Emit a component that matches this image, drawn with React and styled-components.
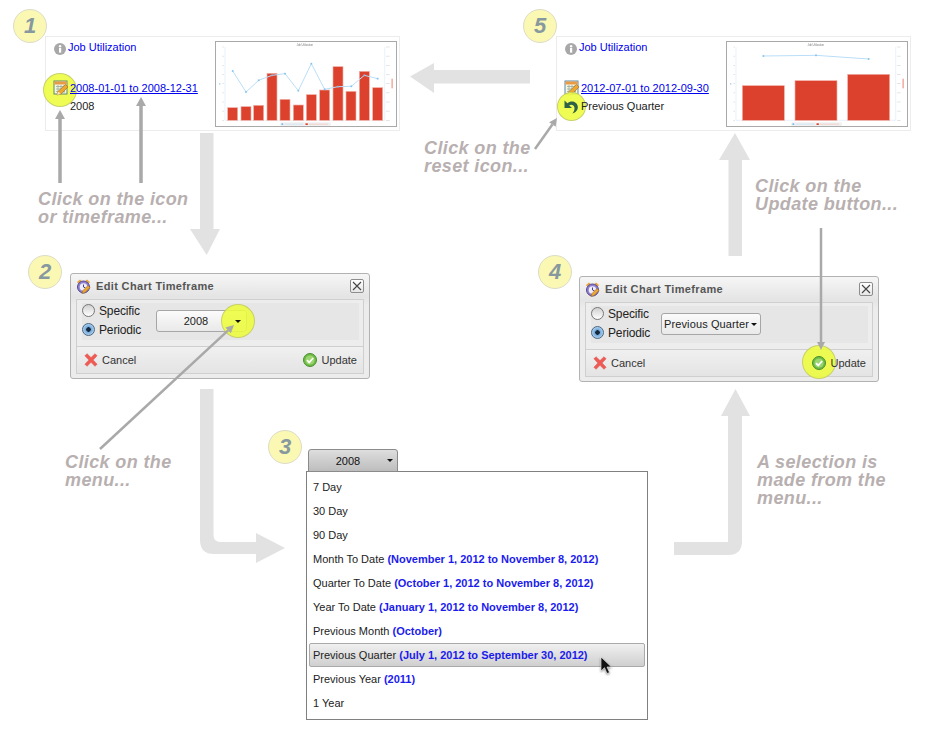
import React from "react";
import styled, { createGlobalStyle } from "styled-components";

const Global = createGlobalStyle`
  html, body { margin: 0; padding: 0; background: #fff; }
  body { font-family: "Liberation Sans", Arial, sans-serif; }
`;

const Canvas = styled.div`
  position: relative;
  width: 925px;
  height: 748px;
  overflow: hidden;
  background: #fff;
`;

const Layer = styled.svg`
  position: absolute;
  left: 0;
  top: 0;
  z-index: ${(p) => p.$z};
  pointer-events: none;
`;

const Badge = styled.div`
  position: absolute;
  left: ${(p) => p.$x - 17}px;
  top: ${(p) => p.$y - 17}px;
  width: 34px;
  height: 34px;
  box-sizing: border-box;
  border-radius: 50%;
  background: #fbf8b4;
  border: 1px solid #dcdcc8;
  display: flex;
  align-items: center;
  justify-content: center;
  font: italic bold 22px "Liberation Sans", sans-serif;
  color: #87999f;
`;

const Caption = styled.div`
  position: absolute;
  left: ${(p) => p.$x}px;
  top: ${(p) => p.$y}px;
  font: italic bold 18px/18px "Liberation Sans", sans-serif;
  letter-spacing: 0.38px;
  color: #b8b0b0;
  white-space: pre-line;
`;

/* ---------- result panels ---------- */
const Panel = styled.section`
  position: absolute;
  left: ${(p) => p.$x}px;
  top: 36px;
  width: 355px;
  height: 95px;
  box-sizing: border-box;
  border: 1px solid #ececec;
  padding: 3px 2px 0 8px;
  display: flex;
  justify-content: space-between;
  align-items: flex-start;
  font-size: 11px;
  line-height: 14px;
  color: #222;
`;

const Summary = styled.div`
  display: flex;
  flex-direction: column;
`;

const TitleRow = styled.div`
  display: flex;
  align-items: center;
  gap: 2px;
  height: 14px;
  margin-bottom: 27px;
  color: #0000ee;
`;

const InfoRow = styled.div`
  display: flex;
  align-items: center;
  height: 14px;
  margin-bottom: 4px;
`;

const IconSlot = styled.span`
  position: relative;
  flex: none;
  width: 16px;
  height: 14px;
  display: block;
`;

const Halo = styled.span`
  position: absolute;
  left: ${(p) => p.$l}px;
  top: ${(p) => p.$t}px;
  width: ${(p) => p.$d}px;
  height: ${(p) => p.$d}px;
  box-sizing: border-box;
  border-radius: 50%;
  background: rgba(236, 252, 60, 0.88);
  border: 1px solid rgba(170, 175, 120, 0.55);
`;

const SlotIcon = styled.svg`
  position: absolute;
  left: ${(p) => p.$l || 0}px;
  top: ${(p) => p.$t || 0}px;
`;

const DateLink = styled.a`
  position: relative;
  color: #0000ee;
  text-decoration: underline;
`;

const StatusText = styled.span`
  position: relative;
`;

const ChartFrame = styled.div`
  width: 182px;
  height: 86px;
  margin-top: 1px;
  box-sizing: border-box;
  border: 1px solid #a9a9a9;
  background: #fff;
`;

const ChartSvg = styled.svg`
  display: block;
  width: 180px;
  height: 84px;
  filter: blur(0.4px);
`;

/* ---------- dialogs ---------- */
const Dialog = styled.div`
  position: absolute;
  left: ${(p) => p.$x}px;
  top: ${(p) => p.$y}px;
  width: 300px;
  height: 106px;
  box-sizing: border-box;
  border: 1px solid #b2b2b2;
  border-radius: 3px;
  padding: 0 5px 4px;
  background: linear-gradient(#f6f6f6, #e4e4e4 22%, #ececec 30%);
  color: #333;
`;

const TitleBar = styled.header`
  height: 25px;
  display: flex;
  align-items: center;
  gap: 5px;
`;

const DialogTitle = styled.h2`
  margin: 0 0 2px;
  flex: 1;
  font: bold 11px "Liberation Sans", sans-serif;
  letter-spacing: 0.35px;
  color: #555;
`;

const CloseBox = styled.button`
  width: 14px;
  height: 14px;
  margin-bottom: 1px;
  padding: 0;
  box-sizing: border-box;
  border: 1px solid #8d8d8d;
  border-radius: 2px;
  background: linear-gradient(#fff, #e6e6e6);
  display: flex;
  align-items: center;
  justify-content: center;
`;

const DialogBody = styled.div`
  height: 75px;
  box-sizing: border-box;
  border: 1px solid #cfcfcf;
  background: #ededed;
`;

const Options = styled.div`
  height: 37px;
  margin: 3px 4px 6px 5px;
  background: #e6e6e6;
  display: flex;
  align-items: center;
`;

const RadioGroup = styled.div`
  width: 74px;
  flex: none;
  margin-top: -3px;
  display: flex;
  flex-direction: column;
  font-size: 12px;
  letter-spacing: -0.15px;
  color: #222;
`;

const RadioRow = styled.label`
  height: 19px;
  display: flex;
  align-items: center;
  gap: 4px;
`;

const Radio = styled.span`
  width: 13px;
  height: 13px;
  box-sizing: border-box;
  border-radius: 50%;
  border: 1px solid ${(p) => (p.$on ? "#49657f" : "#777")};
  background: ${(p) =>
    p.$on
      ? "radial-gradient(circle at 50% 50%, #16283a 0 2px, #6ea6da 2.5px, #b6d6f2 6px)"
      : "linear-gradient(#d0d0d0, #fff)"};
`;

const Select = styled.div`
  width: ${(p) => p.$w}px;
  height: 22px;
  margin-top: -1px;
  box-sizing: border-box;
  border: 1px solid #a6a6a6;
  border-radius: 3px;
  background: linear-gradient(#fbfbfb, #e9e9e9);
  display: flex;
  align-items: center;
  position: relative;
  font-size: 11px;
  letter-spacing: ${(p) => (p.$compact ? "0.12px" : "0")};
  color: #222;
  padding: 0 2px;
  margin-left: ${(p) => p.$ml || 0}px;
`;

const SelectLabel = styled.span`
  flex: ${(p) => (p.$compact ? "none" : 1)};
  text-align: center;
  padding-right: ${(p) => (p.$compact ? 0 : 2)}px;
`;

const Caret = styled.span`
  width: 0;
  height: 0;
  border-left: 3px solid transparent;
  border-right: 3px solid transparent;
  border-top: 3px solid #111;
  margin-left: ${(p) => p.$ml || 0}px;
  margin-right: ${(p) => p.$mr || 0}px;
  flex: none;
  position: relative;
  z-index: 2;
`;

const SelectHalo = styled(Halo)`
  z-index: 1;
`;

const Footer = styled.footer`
  height: 27px;
  box-sizing: border-box;
  padding: 0 6px 0 7px;
  border-top: 1px solid #cfcfcf;
  background: linear-gradient(#f0f0f0, #e4e4e4);
  display: flex;
  align-items: center;
  justify-content: space-between;
  font-size: 11px;
  color: #333;
`;

const FooterAction = styled.span`
  display: flex;
  align-items: center;
  gap: ${(p) => p.$gap}px;
  position: relative;
`;

const ActionLabel = styled.span`
  position: relative;
  z-index: 2;
`;

const ActionIcon = styled.svg`
  position: relative;
  z-index: 2;
  flex: none;
`;

/* ---------- dropdown ---------- */
const Dropdown = styled.div`
  position: absolute;
  left: 306px;
  top: 449px;
  width: 342px;
`;

const Trigger = styled.div`
  width: 90px;
  height: 23px;
  margin-left: 2px;
  margin-bottom: -1px;
  box-sizing: border-box;
  border: 1px solid #8b8b8b;
  border-radius: 3px 3px 0 0;
  background: linear-gradient(#dedede, #bdbdbd);
  display: flex;
  align-items: center;
  font-size: 11px;
  color: #111;
  position: relative;
`;

const TriggerLabel = styled.span`
  flex: 1;
  text-align: center;
`;

const Menu = styled.ul`
  list-style: none;
  margin: 0;
  padding: 3px 2px 4px;
  height: 249px;
  box-sizing: border-box;
  border: 1px solid #808080;
  background: #fff;
  font-size: 11px;
  color: #222;
`;

const MenuItem = styled.li`
  position: relative;
  height: 24px;
  box-sizing: border-box;
  padding-left: 3px;
  display: flex;
  align-items: center;
  white-space: pre;
  border: 1px solid ${(p) => (p.$active ? "#aaa" : "transparent")};
  border-radius: 2px;
  background: ${(p) => (p.$active ? "linear-gradient(#f0f0f0, #cfcfcf)" : "none")};
`;

const Range = styled.b`
  color: #1b1bee;
`;

const Cursor = styled.svg`
  position: absolute;
  left: 290px;
  top: 12px;
  filter: drop-shadow(0 1px 1px rgba(0, 0, 0, 0.45));
`;

/* ---------- drawings ---------- */
const InfoIcon = () => (
  <svg width="12" height="12" viewBox="0 0 12 12" style={{ flex: "none", marginTop: 3 }}>
    <circle cx="6" cy="6" r="6" fill="#a8a8a8" />
    <rect x="5" y="5" width="2.2" height="4.6" fill="#fff" />
    <circle cx="6.1" cy="3.2" r="1.2" fill="#fff" />
  </svg>
);

const CalendarIcon = ({ $border, ...props }) => (
  <SlotIcon width="16" height="16" viewBox="0 0 16 16" {...props}>
    <rect x="1" y="1" width="13" height="13" fill="#f6f6e0" stroke={$border} />
    <rect x="1.5" y="1.5" width="12" height="3" fill="#e99a45" />
    <path d="M3 6.5h9M3 9h9M3 11.5h9M5 5v8M8 5v8M11 5v8" stroke="#94ac9c" strokeWidth="0.8" />
    <path d="M4 15l1-3.500L12.500 4.500 15 7l-7 7z" fill="#eda92f" stroke="#a4661b" strokeWidth="0.6" />
    <path d="M4 15l1-3.500 3 2.500z" fill="#f6e2b6" />
  </SlotIcon>
);

const ResetIcon = (props) => (
  <SlotIcon width="16" height="16" viewBox="0 0 16 16" {...props}>
    <path d="M1.500 1.500v7.500h7.500L6.200 6.400C8 5.300 10.500 5.900 11.300 8c.7 2-.2 4.500-1.900 6.500 3.500-1 5.800-3.700 5.400-7C14.300 3.200 8.500.8 4.400 4.200z" fill="#2f6147" />
  </SlotIcon>
);

const ClockIcon = () => (
  <svg width="15" height="15" viewBox="0 0 15 15" style={{ flex: "none" }}>
    <path d="M1 3l3-2.500 1.500 1.500-3 3zM14 3l-3-2.500-1.500 1.500 3 3z" fill="#e9a23a" />
    <circle cx="7.500" cy="8" r="6" fill="#8f7fd0" stroke="#54478f" strokeWidth="1" />
    <circle cx="7.500" cy="8" r="3.800" fill="#efecfa" />
    <path d="M7.500 5.500V8l2 1" stroke="#4a3f86" strokeWidth="1" fill="none" />
    <path d="M6 14.500l1-3 5-5 2 2-5 5z" fill="#eda92f" stroke="#9a5f1a" strokeWidth="0.5" />
  </svg>
);

const CrossIcon = () => (
  <ActionIcon width="14" height="14" viewBox="0 0 13 13">
    <path d="M.8 2.600L2.800.6l3.700 3.600L10.200.6l2 2L8.500 6.500l3.700 3.900-2 2-3.700-3.700-3.700 3.700-2-2 3.700-3.900z" fill="#ef5a54" stroke="#d9504c" strokeWidth="0.4" />
  </ActionIcon>
);

const CheckIcon = () => (
  <ActionIcon width="14" height="14" viewBox="0 0 14 14">
    <circle cx="7" cy="7" r="6.500" fill="#6dbb45" stroke="#4b8f2f" />
    <circle cx="7" cy="7" r="4.600" fill="#9ad56e" />
    <path d="M4 7.200l2.200 2.200L10.200 5" stroke="#fff" strokeWidth="1.700" fill="none" />
  </ActionIcon>
);

const TICK_ROWS = [33, 60.5, 88, 115.5, 143, 170.5, 198, 225.5, 253];

const Chart = ({ ox, oy, axisL, axisR, bars, barW, line, markerSize }) => {
  const mid = (axisL + axisR) / 2;
  return (
    <ChartSvg viewBox={`${ox} ${oy} 540 252`}>
      <text x={mid} y={oy + 12} fontSize="8" fill="#777" textAnchor="middle" fontFamily="Liberation Sans, sans-serif">
        Job Utilization
      </text>
      <path d={`M${axisL} 33V253M${axisR} 33V253M${axisL} 253H${axisR}`} stroke="#dcecfa" strokeWidth="2" fill="none" />
      {TICK_ROWS.map((y) => (
        <g key={y} fill="#d8d8d8">
          <rect x={axisL - 8} y={y - 1} width="5" height="2" />
          <rect x={axisR + 4} y={y - 1} width="11" height="2" />
        </g>
      ))}
      {bars.map(([x, top]) => (
        <rect key={x} x={x} y={top} width={barW} height={253 - top} fill="#dc412e" stroke="#f2b0a6" strokeWidth="2" />
      ))}
      <polyline points={line.map((p) => p.join(",")).join(" ")} fill="none" stroke="#b9def8" strokeWidth="3" />
      {line.map(([x, y]) => (
        <rect key={x} x={x - markerSize / 2} y={y - markerSize / 2} width={markerSize} height={markerSize} fill="#7fc2f0" />
      ))}
      <rect x={axisL - 18} y="141" width="4" height="5" fill="#aed8f4" />
      <rect x={axisR + 20} y="128" width="5" height="29" fill="#f4b4aa" />
      <rect x={mid - 74} y="259" width="152" height="11" rx="3" fill="#f1f1f1" />
      <rect x={mid - 70} y="262" width="5" height="5" fill="#6fb9ee" />
      <rect x={mid - 60} y="263" width="55" height="3" fill="#cfe6f6" />
      <rect x={mid + 2} y="262" width="7" height="5" fill="#dc412e" />
      <rect x={mid + 12} y="263" width="58" height="3" fill="#f0cfc9" />
    </ChartSvg>
  );
};

const PointerArrow = ({ x1, y1, x2, y2, w = 3.5, head = 5, len = 9 }) => {
  const a = Math.atan2(y2 - y1, x2 - x1);
  const bx = x2 - Math.cos(a) * len;
  const by = y2 - Math.sin(a) * len;
  const nx = -Math.sin(a);
  const ny = Math.cos(a);
  return (
    <g>
      <line x1={x1} y1={y1} x2={bx} y2={by} stroke="#a9a9a9" strokeWidth={w} />
      <polygon points={`${x2},${y2} ${bx + nx * head},${by + ny * head} ${bx - nx * head},${by - ny * head}`} fill="#a9a9a9" />
    </g>
  );
};

const ChartTimeframeDialog = ({ x, y, select, checkHalo }) => (
  <Dialog $x={x} $y={y}>
    <TitleBar>
      <ClockIcon />
      <DialogTitle>Edit Chart Timeframe</DialogTitle>
      <CloseBox>
        <svg width="10" height="10" viewBox="0 0 10 10">
          <path d="M1 1l8 8M9 1l-8 8" stroke="#444" strokeWidth="1.1" />
        </svg>
      </CloseBox>
    </TitleBar>
    <DialogBody>
      <Options>
        <RadioGroup>
          <RadioRow><Radio />Specific</RadioRow>
          <RadioRow><Radio $on />Periodic</RadioRow>
        </RadioGroup>
        {select}
      </Options>
      <Footer>
        <FooterAction $gap={4}><CrossIcon /><ActionLabel>Cancel</ActionLabel></FooterAction>
        <FooterAction $gap={5}>
          {checkHalo && <Halo $l={-10} $t={-11} $d={34} />}
          <CheckIcon />
          <ActionLabel>Update</ActionLabel>
        </FooterAction>
      </Footer>
    </DialogBody>
  </Dialog>
);

const MENU = [
  ["7 Day"],
  ["30 Day"],
  ["90 Day"],
  ["Month To Date", "(November 1, 2012 to November 8, 2012)"],
  ["Quarter To Date", "(October 1, 2012 to November 8, 2012)"],
  ["Year To Date", "(January 1, 2012 to November 8, 2012)"],
  ["Previous Month", "(October)"],
  ["Previous Quarter", "(July 1, 2012 to September 30, 2012)"],
  ["Previous Year", "(2011)"],
  ["1 Year"],
];

const YEAR_BARS = [[52, 215], [92, 212], [130, 208], [170, 112], [209, 190], [249, 207], [288, 176], [328, 162], [368, 92], [407, 166], [447, 106], [487, 155]];
const YEAR_LINE = [[67, 105], [107, 168], [145, 133], [185, 118], [224, 113], [264, 164], [303, 83], [343, 160], [383, 152], [423, 151], [462, 118], [502, 128]];
const QUARTER_BARS = [[66, 149], [224, 134], [382, 115]];
const QUARTER_LINE = [[129, 60], [287, 58], [445, 69]];

export default function App() {
  return (
    <Canvas>
      <Global />

      <Layer $z={0} width="925" height="748" viewBox="0 0 925 748">
        <g fill="#e2e2e2">
          <path d="M200 133h13.5v96H220l-13.3 26-16.7-26h10z" />
          <path d="M200 389h13.5v146q0 7 7 7H256v-9l29 15-29 15v-9H214q-14 0-14-14z" />
          <path d="M674 542h54V416h-7l14.5-27L750 416h-8v125q0 14-14 14h-54z" />
          <path d="M728.500 256h13.500v-96h8l-15-27-16 27h9.500z" />
          <path d="M530 70v13.500h-96v9.500l-24-16.500 24-13.500v7z" />
        </g>
      </Layer>

      <Panel $x={45}>
        <Summary>
          <TitleRow><InfoIcon />Job Utilization</TitleRow>
          <InfoRow>
            <IconSlot>
              <Halo $l={-11} $t={-8} $d={34} />
              <CalendarIcon $l={-1} $t={-1} $border="#5f8a6a" />
            </IconSlot>
            <DateLink>2008-01-01 to 2008-12-31</DateLink>
          </InfoRow>
          <InfoRow><IconSlot /><StatusText>2008</StatusText></InfoRow>
        </Summary>
        <ChartFrame>
          <Chart ox={17} oy={18} axisL={44} axisR={523} bars={YEAR_BARS} barW={30} line={YEAR_LINE} markerSize={5} />
        </ChartFrame>
      </Panel>

      <Panel $x={556}>
        <Summary>
          <TitleRow><InfoIcon />Job Utilization</TitleRow>
          <InfoRow>
            <IconSlot><CalendarIcon $l={-1} $t={-1} $border="#5d86a8" /></IconSlot>
            <DateLink>2012-07-01 to 2012-09-30</DateLink>
          </InfoRow>
          <InfoRow>
            <IconSlot>
              <Halo $l={-8} $t={-7} $d={29} />
              <ResetIcon $l={-2} $t={0} />
            </IconSlot>
            <StatusText>Previous Quarter</StatusText>
          </InfoRow>
        </Summary>
        <ChartFrame>
          <Chart ox={20} oy={18} axisL={47} axisR={526} bars={QUARTER_BARS} barW={126} line={QUARTER_LINE} markerSize={5} />
        </ChartFrame>
      </Panel>

      <ChartTimeframeDialog
        x={70}
        y={273}
        select={
          <Select $w={91}>
            <SelectHalo $l={64} $t={-7} $d={34} />
            <SelectLabel>2008</SelectLabel>
            <Caret $mr={3} />
          </Select>
        }
      />

      <ChartTimeframeDialog
        x={579}
        y={276}
        checkHalo
        select={
          <Select $w={100} $compact $ml={-4}>
            <SelectLabel $compact>Previous Quarter</SelectLabel>
            <Caret $ml={2} />
          </Select>
        }
      />

      <Dropdown>
        <Trigger>
          <TriggerLabel>2008</TriggerLabel>
          <Caret $mr={4} />
        </Trigger>
        <Menu>
          {MENU.map(([label, range]) => {
            const active = label === "Previous Quarter";
            return (
              <MenuItem key={label} $active={active}>
                {label}
                {range && " "}
                {range && <Range>{range}</Range>}
                {active && (
                  <Cursor width="13" height="19" viewBox="0 0 13 19">
                    <path d="M1 1v14l3.500-3.300L7 17.500l2.500-1-2.500-5.500H11.500z" fill="#111" stroke="#fff" strokeWidth="0.6" />
                  </Cursor>
                )}
              </MenuItem>
            );
          })}
        </Menu>
      </Dropdown>

      <Badge $x={30} $y={26}>1</Badge>
      <Badge $x={540} $y={26}>5</Badge>
      <Badge $x={45} $y={272}>2</Badge>
      <Badge $x={555} $y={272}>4</Badge>
      <Badge $x={285} $y={447}>3</Badge>

      <Caption $x={38} $y={190}>{"Click on the icon\nor timeframe..."}</Caption>
      <Caption $x={424} $y={139}>{"Click on the\nreset icon..."}</Caption>
      <Caption $x={755} $y={177}>{"Click on the\nUpdate button..."}</Caption>
      <Caption $x={65} $y={453}>{"Click on the\nmenu..."}</Caption>
      <Caption $x={757} $y={453}>{"A selection is\nmade from the\nmenu..."}</Caption>

      <Layer $z={5} width="925" height="748" viewBox="0 0 925 748">
        <PointerArrow x1={60} y1={183} x2={60} y2={110} />
        <PointerArrow x1={141} y1={183} x2={141} y2={97} />
        <PointerArrow x1={535} y1={149} x2={557} y2={118} w={2.5} head={4} len={8} />
        <PointerArrow x1={100} y1={449} x2={234} y2={325} w={2.5} head={4} len={8} />
        <PointerArrow x1={821} y1={228} x2={821} y2={350} w={2.5} head={4} len={8} />
      </Layer>
    </Canvas>
  );
}
